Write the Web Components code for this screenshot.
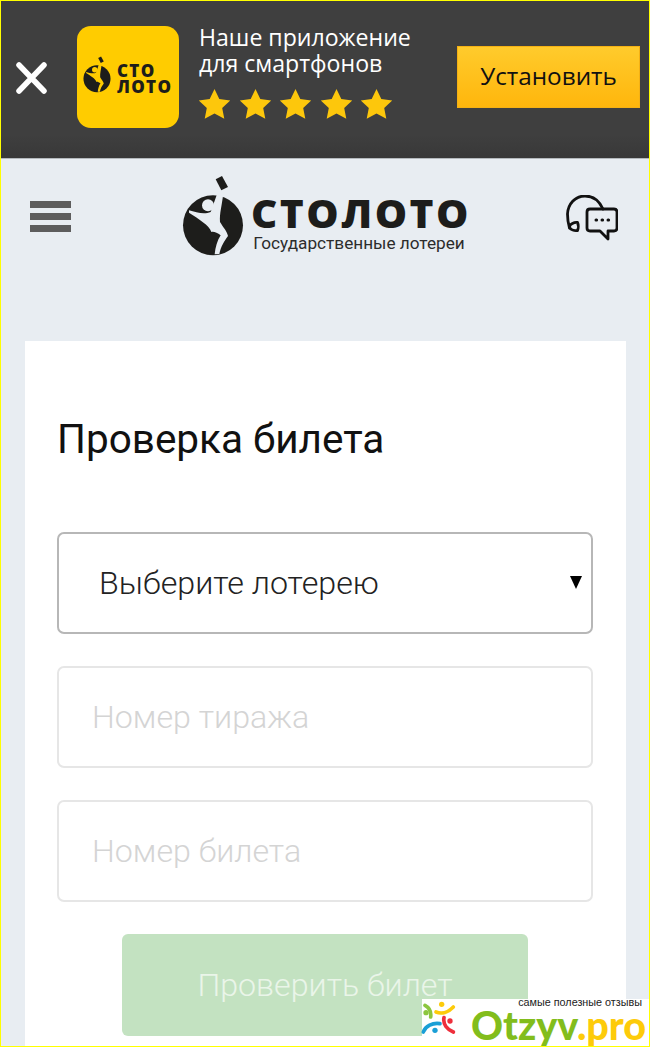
<!DOCTYPE html>
<html lang="ru">
<head>
<meta charset="utf-8">
<title>Столото</title>
<style>
    html, body { margin: 0; padding: 0; }
    body { width: 650px; height: 1047px; overflow: hidden; font-family: Roboto, sans-serif; }
</style>
</head>
<body>
<stoloto-page>
    <app-banner></app-banner>
    <site-header></site-header>
    <check-card></check-card>
    <otzyv-mark></otzyv-mark>
</stoloto-page>

<script>
// round mark with the figure, shared by banner icon and header logo
const markSvg = (size, color, cut) => `
    <svg width="${size}" height="${size * 81 / 62}" viewBox="12 9 186 243" style="display:block;flex:none">
        <path d="M113 22l19-10 18 33-20 10z" fill="${color}"/>
        <circle cx="105" cy="160" r="90" fill="${color}"/>
        <path d="M33 115C55 122 80 128 98 120L118 64H136C132 100 124 125 126 150 135 165 147 178 150 192 140 205 128 225 124 246L110 247C112 225 118 205 128 190 118 183 108 178 100 180 95 160 60 140 33 122z" fill="${cut}"/>
        <circle cx="90" cy="100" r="18" fill="${cut}"/>
    </svg>`;

class AppBanner extends HTMLElement {
    constructor() {
        super();
        this.attachShadow({ mode: 'open' });
        const star = `<svg width="33" height="31" viewBox="0 0 33 31"><path d="M16.5 1l4.800 10 10.900 1.400-8 7.500 2.100 10.800-9.800-5.300-9.800 5.300 2.100-10.800-8-7.500 10.900-1.400z" fill="#fdc70c"/></svg>`;
        this.shadowRoot.innerHTML = `
        <style>
            :host {
                display: flex;
                align-items: center;
                height: 158px;
                box-sizing: border-box;
                padding: 0 9px 5px 14px;
                background: linear-gradient(to bottom, #3f3f3f, #3f3f3f 85%, #383838);
                border-bottom: 1px solid #b4b9bd;
                font-family: "Open Sans", sans-serif;
            }
            .close { flex: none; width: 33px; height: 33px; }
            .icon {
                flex: none;
                display: flex;
                align-items: center;
                gap: 6px;
                box-sizing: border-box;
                width: 102px;
                height: 102px;
                margin: 0 20px 0 29px;
                padding-left: 6px;
                border-radius: 14px;
                background: #ffcc00;
            }
            .icon svg { margin-top: -5px; }
            .icon b {
                margin-top: 4px;
                font: 800 17px/16px "Open Sans", sans-serif;
                color: #1d1d1b;
                letter-spacing: 1.3px;
            }
            .info { flex: 1; margin-bottom: 11px; }
            .info p {
                margin: 0;
                color: #fff;
                font-size: 23.100px;
                line-height: 26px;
                white-space: nowrap;
            }
            .stars { display: flex; gap: 7.600px; margin: 12px 0 0 -1px; }
            .stars svg { display: block; }
            .install {
                flex: none;
                width: 183px;
                height: 62px;
                box-sizing: border-box;
                border: 1px solid #f5b114;
                background: linear-gradient(to bottom, #ffcb2c, #ffb60c);
                color: #111;
                font-size: 24.300px;
                line-height: 58px;
                text-align: center;
            }
        </style>
        <svg class="close" viewBox="0 0 33 33">
            <path d="M4 4l25 26M29 4L4 30" stroke="#fff" stroke-width="5.500" stroke-linecap="round" fill="none"/>
        </svg>
        <div class="icon">
            ${markSvg(28, '#1d1d1b', '#ffcc00')}
            <b>СТО<br>ЛОТО</b>
        </div>
        <div class="info">
            <p>Наше приложение<br>для смартфонов</p>
            <div class="stars">${star.repeat(5)}</div>
        </div>
        <div class="install">Установить</div>
        `;
    }
}

class SiteHeader extends HTMLElement {
    constructor() {
        super();
        this.attachShadow({ mode: 'open' });
        this.shadowRoot.innerHTML = `
        <style>
            :host {
                display: flex;
                justify-content: space-between;
                align-items: flex-start;
                height: 182px;
                box-sizing: border-box;
                padding: 16px 31px 0 29px;
            }
            .burger {
                display: flex;
                flex-direction: column;
                gap: 5.500px;
                width: 41px;
                margin-top: 26px;
            }
            .burger i { display: block; height: 6.500px; background: #5d5d5d; }
            .logo { display: flex; gap: 7px; margin-left: 10px; }
            .words { padding-top: 19px; }
            .brand {
                font: 800 38px/38px "Open Sans", sans-serif;
                color: #1d1d1b;
                letter-spacing: 2.300px;
                transform: scaleX(1.07);
                transform-origin: left;
            }
            .sub {
                margin: 1px 0 0 2px;
                font: 400 17.200px/20px Roboto, sans-serif;
                color: #2c2c2c;
                white-space: nowrap;
            }
            .chat { margin-top: 20px; display: block; }
        </style>
        <div class="burger"><i></i><i></i><i></i></div>
        <div class="logo">
            ${markSvg(62, '#1d1d1b', '#e8edf2')}
            <div class="words">
                <div class="brand">СТОЛОТО</div>
                <div class="sub">Государственные лотереи</div>
            </div>
        </div>
        <svg class="chat" width="52" height="46" viewBox="0 0 52 46" fill="none" stroke="#111" stroke-width="2.800" stroke-linejoin="round" stroke-linecap="round">
            <path d="M37 14C33 5 26 1 19 1 9 1 2 9 1.500 19c0 5 .5 9 2 14"/>
            <path d="M3.500 32c0-3 5-5 8-4.500 1 2 1 6 0 8-3 .5-7-.5-8-3.500z"/>
            <path d="M24 14h24c2 0 3 1 3 3v16c0 2-1 3-3 3h-6v8l-8-8H24c-2 0-3-1-3-3V17c0-2 1-3 3-3z"/>
            <path d="M30 25h.6M36 25h.6M42 25h.6" stroke-width="3"/>
        </svg>
        `;
    }
}

class FormField extends HTMLElement {
    constructor() {
        super();
        this.attachShadow({ mode: 'open' });
        const arrow = this.hasAttribute('select')
            ? '<svg class="arrow" width="12" height="13" viewBox="0 0 12 13"><path d="M0 0h12L6 13z" fill="#000"/></svg>' : '';
        this.shadowRoot.innerHTML = `
        <style>
            :host {
                display: flex;
                align-items: center;
                justify-content: space-between;
                box-sizing: border-box;
                height: 102px;
                padding: 0 9px 0 33px;
                border: 2px solid #e6e6e6;
                border-radius: 7px;
                background: #fff;
                color: #d4d4d4;
                font: 300 32.200px/38px Roboto, sans-serif;
            }
            :host([select]) {
                padding-left: 40px;
                border-color: #b7b7b7;
                color: #222;
            }
            .arrow { display: block; margin-top: -1px; }
        </style>
        <slot></slot>${arrow}
        `;
    }
}

class CheckCard extends HTMLElement {
    constructor() {
        super();
        this.attachShadow({ mode: 'open' });
        this.shadowRoot.innerHTML = `
        <style>
            :host {
                display: block;
                box-sizing: border-box;
                width: 601px;
                height: 706px;
                margin-left: 24px;
                padding: 76px 33px 0 32px;
                background: #fff;
            }
            h1 {
                margin: 0 0 71px;
                font: 400 40.500px/44px Roboto, sans-serif;
                color: #111;
            }
            .fields { display: flex; flex-direction: column; gap: 32px; }
            .submit {
                width: 406px;
                height: 102px;
                margin: 32px 0 0 65px;
                border-radius: 6px;
                background: #c3e2c1;
                color: #eaf5e9;
                font: 300 32.200px/102px Roboto, sans-serif;
                text-align: center;
            }
        </style>
        <h1>Проверка билета</h1>
        <div class="fields">
            <form-field select>Выберите лотерею</form-field>
            <form-field>Номер тиража</form-field>
            <form-field>Номер билета</form-field>
        </div>
        <div class="submit">Проверить билет</div>
        `;
    }
}

// watermark lies over the bottom right corner of the page
class OtzyvMark extends HTMLElement {
    constructor() {
        super();
        this.attachShadow({ mode: 'open' });
        this.shadowRoot.innerHTML = `
        <style>
            :host {
                position: absolute;
                right: 0;
                bottom: 0;
                width: 227px;
                height: 47px;
                background: #fff;
                font-family: "Liberation Sans", sans-serif;
            }
            svg { position: absolute; left: -2px; top: -2px; }
            .tag {
                position: absolute;
                right: 7px;
                top: -2px;
                font-size: 10.800px;
                line-height: 11px;
                color: #222;
                white-space: nowrap;
            }
            .name {
                position: absolute;
                left: 49px;
                top: 9px;
                font: 900 39.500px/34px Lato, sans-serif;
                color: #82bd1c;
                white-space: nowrap;
            }
            .name span { color: #fdcb0a; }
        </style>
        <svg width="50" height="45" viewBox="0 0 150 135" fill="none" stroke-width="11" stroke-linecap="round">
            <path d="M15 25C28 32 34 45 32 60" stroke="#8cc63f"/>
            <circle cx="18" cy="47" r="8" fill="#8cc63f"/>
            <circle cx="65" cy="22" r="8" fill="#fdcb0a"/>
            <path d="M48 45C65 52 85 46 100 30" stroke="#fdcb0a"/>
            <circle cx="90" cy="72" r="8" fill="#ee2f3c"/>
            <path d="M72 62C68 82 82 98 100 105" stroke="#ee2f3c"/>
            <circle cx="45" cy="100" r="8" fill="#1a9fd6"/>
            <path d="M10 105C16 88 38 76 60 80" stroke="#1a9fd6"/>
        </svg>
        <div class="tag">самые полезные отзывы</div>
        <div class="name">Otzyv<span>.pro</span></div>
        `;
    }
}

class StolotoPage extends HTMLElement {
    constructor() {
        super();
        this.attachShadow({ mode: 'open' });
        this.shadowRoot.innerHTML = `
        <style>
            :host {
                display: block;
                position: relative;
                box-sizing: border-box;
                width: 650px;
                height: 1047px;
                overflow: hidden;
                border: 1px solid #ffff00;
                background: #e8edf2;
            }
        </style>
        <slot></slot>
        `;
    }
}

customElements.define('app-banner', AppBanner);
customElements.define('site-header', SiteHeader);
customElements.define('form-field', FormField);
customElements.define('check-card', CheckCard);
customElements.define('otzyv-mark', OtzyvMark);
customElements.define('stoloto-page', StolotoPage);
</script>
</body>
</html>
